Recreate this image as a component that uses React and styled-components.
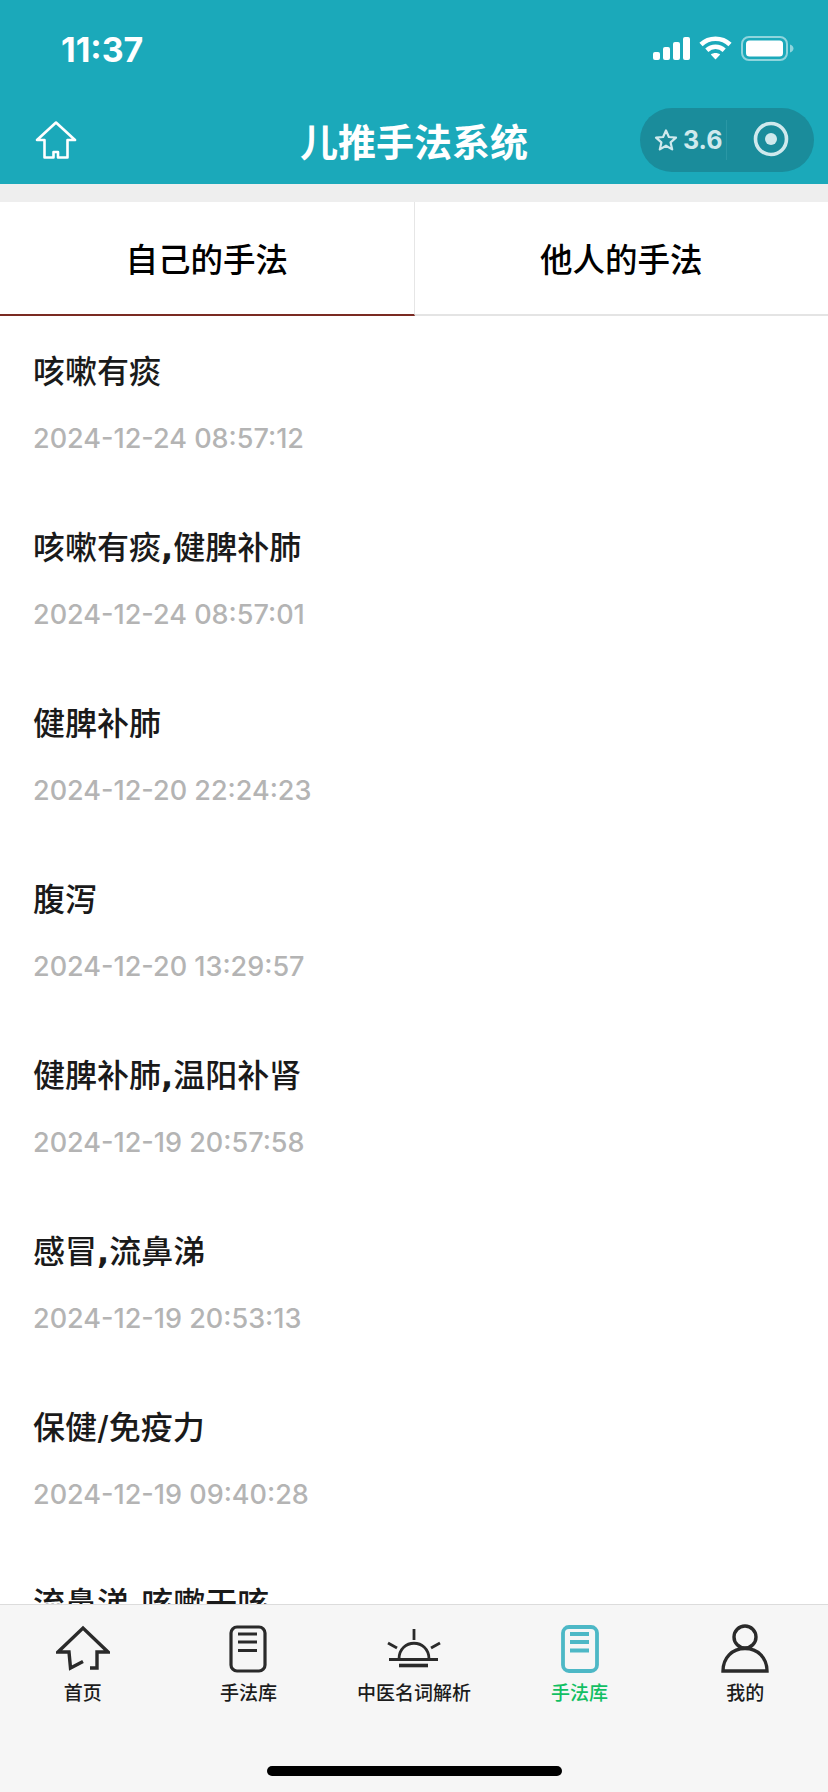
import React from 'react';
import styled, { createGlobalStyle } from 'styled-components';

const GlobalStyle = createGlobalStyle`
    html, body {
        margin: 0;
        padding: 0;
        background: #ffffff;
    }
`;

const FONT = `Inter, "Noto Sans CJK SC", sans-serif`;
const CJK = `"Noto Sans CJK SC", sans-serif`;

const Page = styled.div`
    width: 828px;
    height: 1792px;
    display: flex;
    flex-direction: column;
    overflow: hidden;
    background: #ffffff;
    font-family: ${CJK};
`;

const Header = styled.header`
    height: 184px;
    flex-shrink: 0;
    background: #1ba9ba;
    color: #ffffff;
`;

const StatusBar = styled.div`
    height: 100px;
    display: flex;
    justify-content: space-between;
    padding: 33px 34px 0 61px;
    box-sizing: border-box;
`;

const Clock = styled.div`
    font-family: ${FONT};
    font-size: 34px;
    line-height: 34px;
    font-weight: 700;
`;

const StatusIcons = styled.div`
    display: flex;
    gap: 9px;
    height: 30px;
    align-items: center;
`;

const NavBar = styled.div`
    height: 84px;
    display: flex;
    align-items: flex-start;
    justify-content: space-between;
    padding: 8px 14px 0 35px;
    position: relative;
`;

const NavTitle = styled.div`
    position: absolute;
    left: 0;
    right: 0;
    top: 12px;
    text-align: center;
    font-size: 38px;
    line-height: 56px;
    font-weight: 700;
`;

const HomeButton = styled.div`
    margin-top: 13px;
    display: flex;
`;

const Capsule = styled.div`
    width: 174px;
    height: 64px;
    border-radius: 32px;
    background: #1a8c9b;
    display: flex;
    align-items: center;
    position: relative;
    color: #cfe9ed;
`;

const Score = styled.div`
    width: 87px;
    padding-left: 14px;
    box-sizing: border-box;
    display: flex;
    align-items: center;
    gap: 5px;
    font-family: ${FONT};
    font-size: 25px;
    font-weight: 700;
    border-right: 1px solid #2a97a5;
    height: 40px;
`;

const RecordDot = styled.div`
    flex: 1;
    display: flex;
    justify-content: center;
    margin-left: 1px;
    margin-top: -3px;
`;

const Gap = styled.div`
    height: 18px;
    flex-shrink: 0;
    background: #eeeeee;
`;

const Tabs = styled.div`
    display: flex;
    height: 114px;
    flex-shrink: 0;
`;

const Tab = styled.div`
    flex: 1;
    display: flex;
    align-items: center;
    justify-content: center;
    box-sizing: border-box;
    padding-bottom: 2px;
    font-size: 32.5px;
    font-weight: 500;
    color: #000000;
    border-bottom: 2px solid ${(p) => (p.$active ? '#7a2a22' : '#e4e4e4')};
    border-right: ${(p) => (p.$active ? '1px solid #e6e6e6' : 'none')};
`;

const List = styled.div`
    flex: 1;
    overflow: hidden;
`;

const Item = styled.div`
    height: 176px;
    box-sizing: border-box;
    padding: 31px 33px 0;
`;

const ItemTitle = styled.div`
    height: 44px;
    font-size: 32px;
    line-height: 44px;
    font-weight: 500;
    color: #1a1a1a;
`;

const Comma = styled.span`
    font-family: "DejaVu Sans", sans-serif;
    font-weight: 700;
`;

const Slash = styled.span`
    font-family: Inter, sans-serif;
`;

const ItemDate = styled.div`
    margin-top: 30px;
    font-family: ${FONT};
    font-size: 27px;
    line-height: 36px;
    font-weight: 500;
    color: #b4b4b4;
`;

const TabBar = styled.nav`
    height: 188px;
    flex-shrink: 0;
    box-sizing: border-box;
    border-top: 1px solid #dcdcdc;
    background: #f6f6f6;
    display: grid;
    grid-template-columns: repeat(5, 1fr);
    position: relative;
`;

const TabItem = styled.div`
    display: flex;
    flex-direction: column;
    align-items: center;
`;

const TabIcon = styled.div`
    height: 54px;
    margin-top: 17px;
    display: flex;
    align-items: center;
    justify-content: center;
`;

const TabLabel = styled.div`
    margin-top: 2px;
    font-size: 19px;
    line-height: 28px;
    font-weight: 500;
    color: ${(p) => (p.$active ? '#12bf63' : '#1c1c1c')};
`;

const HomeIndicator = styled.div`
    position: absolute;
    left: 267px;
    bottom: 16px;
    width: 295px;
    height: 10px;
    border-radius: 5px;
    background: #000000;
`;

const SignalIcon = () => (
    <svg width="37" height="23" viewBox="0 0 37 23" fill="#ffffff">
        <rect x="0" y="15" width="7" height="8" rx="2" />
        <rect x="10" y="10" width="7" height="13" rx="2" />
        <rect x="20" y="5" width="7" height="18" rx="2" />
        <rect x="30" y="0" width="7" height="23" rx="2" />
    </svg>
);

const WifiIcon = () => (
    <svg width="33" height="24" viewBox="0 0 33 24" fill="none" stroke="#ffffff" strokeWidth="4.6">
        <path d="M2 8.5C10 0.8 23 0.8 31 8.5" />
        <path d="M7.8 14.2C12.8 9.6 20.2 9.6 25.2 14.2" />
        <path d="M16.5 23.5L11.8 18.6C14.4 16.6 18.6 16.6 21.2 18.6Z" fill="#ffffff" stroke="none" />
    </svg>
);

const BatteryIcon = () => (
    <svg width="53" height="25" viewBox="0 0 53 25" fill="none">
        <rect x="1" y="1" width="45" height="23" rx="7" stroke="#8fd5dd" strokeWidth="2" />
        <rect x="5" y="4.5" width="37" height="16" rx="3.5" fill="#ffffff" />
        <path d="M49 8.5C51.5 9.5 52.5 11 52.5 12.5C52.5 14 51.5 15.5 49 16.5Z" fill="#8fd5dd" />
    </svg>
);

const NavHomeIcon = () => (
    <svg width="42" height="38" viewBox="0 0 42 38" fill="none" stroke="#ffffff" strokeWidth="2.6" strokeLinejoin="round">
        <path d="M21 1.5L40 19H32.5V36.5H23V31H18.5V36.5H9.5V19H2Z" />
    </svg>
);

const StarIcon = () => (
    <svg width="24" height="24" viewBox="0 0 24 24" fill="none" stroke="#cfe9ed" strokeWidth="2.2" strokeLinejoin="round">
        <path d="M12 2.5L14.9 9L22 9.7L16.6 14.4L18.2 21.4L12 17.7L5.8 21.4L7.4 14.4L2 9.7L9.1 9Z" />
    </svg>
);

const TargetIcon = () => (
    <svg width="36" height="36" viewBox="0 0 36 36" fill="none">
        <circle cx="18" cy="18" r="15.5" stroke="#cfe9ed" strokeWidth="3.6" />
        <circle cx="18" cy="18" r="6" fill="#cfe9ed" />
    </svg>
);

const HomeTabIcon = () => (
    <svg width="54" height="48" viewBox="0 0 54 48" fill="none" stroke="#2a2a2a" strokeWidth="3.4" strokeLinejoin="miter">
        <path d="M34 43H41V27H52L27 3L2 27H13L14.5 43L27 36.5" />
    </svg>
);

const DocIcon = ({ color, active }) => (
    <svg width="38" height="48" viewBox="0 0 38 48" fill="none" stroke={color} strokeWidth={active ? 3.8 : 3.2}>
        <rect x="2" y="2" width="34" height="44" rx="6" />
        <path d="M9 9H28M9 17H28M9 25.5H28" />
    </svg>
);

const SunIcon = () => (
    <svg width="56" height="40" viewBox="0 0 56 40" fill="none" stroke="#2a2a2a" strokeWidth="2.8">
        <path d="M28 0V11" />
        <path d="M2 14L11 19" />
        <path d="M54 14L45 19" />
        <path d="M13 30C13 9 43 9 43 30" />
        <path d="M3 30.5H52" />
        <path d="M13 36.5H42" strokeWidth="3.6" />
    </svg>
);

const UserIcon = () => (
    <svg width="50" height="50" viewBox="0 0 50 50" fill="none" stroke="#2a2a2a" strokeWidth="3.4">
        <circle cx="25" cy="13" r="11" />
        <path d="M3 47C3 34 12 24.5 25 24.5C38 24.5 47 34 47 47Z" />
    </svg>
);

const ITEMS = [
    { title: '咳嗽有痰', date: '2024-12-24 08:57:12' },
    { title: '咳嗽有痰,健脾补肺', date: '2024-12-24 08:57:01' },
    { title: '健脾补肺', date: '2024-12-20 22:24:23' },
    { title: '腹泻', date: '2024-12-20 13:29:57' },
    { title: '健脾补肺,温阳补肾', date: '2024-12-19 20:57:58' },
    { title: '感冒,流鼻涕', date: '2024-12-19 20:53:13' },
    { title: '保健/免疫力', date: '2024-12-19 09:40:28' },
    { title: '流鼻涕,咳嗽干咳' },
];

const TABS = [
    { label: '首页', icon: <HomeTabIcon /> },
    { label: '手法库', icon: <DocIcon color="#2a2a2a" /> },
    { label: '中医名词解析', icon: <SunIcon /> },
    { label: '手法库', icon: <DocIcon color="#4db8c6" active />, active: true },
    { label: '我的', icon: <UserIcon /> },
];

// the comma and slash in the titles come from a different latin face
const renderTitle = (title) =>
    title.split(/([,/])/).map((part, i) => {
        if (part === ',') return <Comma key={i}>,</Comma>;
        if (part === '/') return <Slash key={i}>/</Slash>;
        return part;
    });

const App = () => {
    return (
        <Page>
            <GlobalStyle />
            <Header>
                <StatusBar>
                    <Clock>11:37</Clock>
                    <StatusIcons>
                        <SignalIcon />
                        <WifiIcon />
                        <BatteryIcon />
                    </StatusIcons>
                </StatusBar>
                <NavBar>
                    <HomeButton>
                        <NavHomeIcon />
                    </HomeButton>
                    <NavTitle>儿推手法系统</NavTitle>
                    <Capsule>
                        <Score>
                            <StarIcon />
                            3.6
                        </Score>
                        <RecordDot>
                            <TargetIcon />
                        </RecordDot>
                    </Capsule>
                </NavBar>
            </Header>
            <Gap />
            <Tabs>
                <Tab $active>自己的手法</Tab>
                <Tab>他人的手法</Tab>
            </Tabs>
            <List>
                {ITEMS.map((item) => (
                    <Item key={item.title}>
                        <ItemTitle>{renderTitle(item.title)}</ItemTitle>
                        {item.date && <ItemDate>{item.date}</ItemDate>}
                    </Item>
                ))}
            </List>
            <TabBar>
                {TABS.map((tab, i) => (
                    <TabItem key={i}>
                        <TabIcon>{tab.icon}</TabIcon>
                        <TabLabel $active={tab.active}>{tab.label}</TabLabel>
                    </TabItem>
                ))}
                <HomeIndicator />
            </TabBar>
        </Page>
    );
};

export default App;
